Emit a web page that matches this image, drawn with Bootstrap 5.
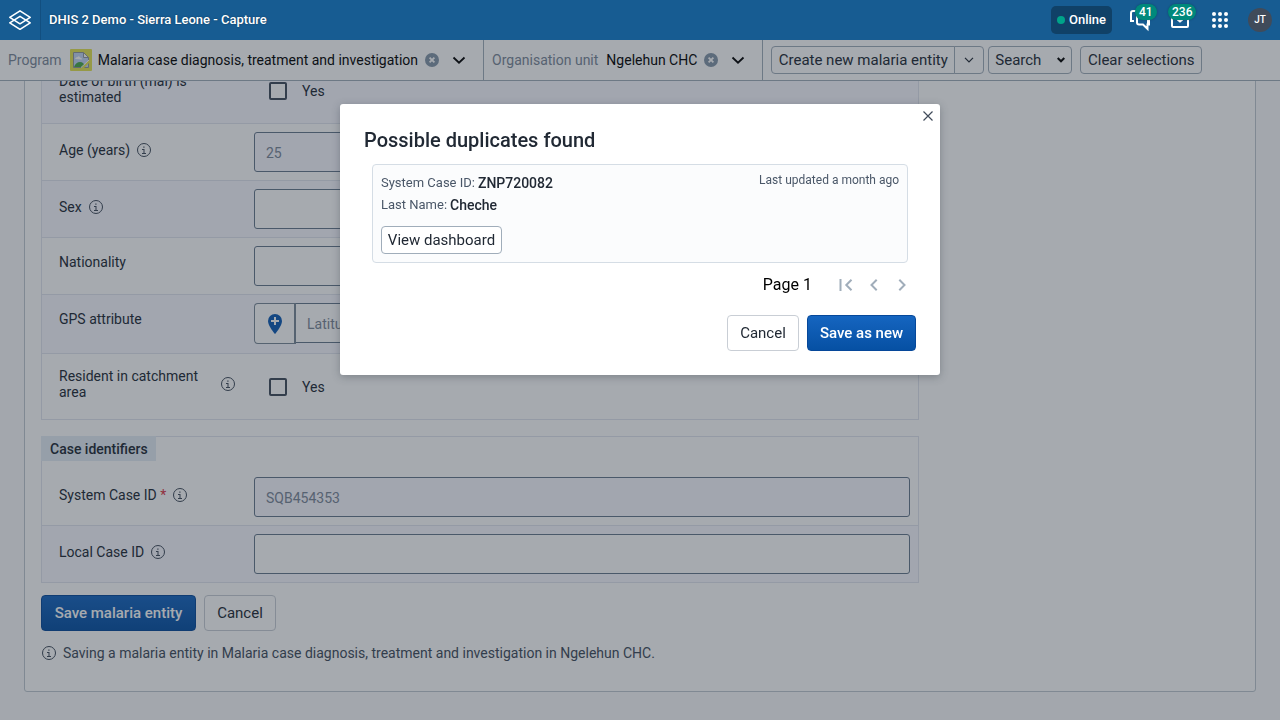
<!DOCTYPE html>
<html lang="en">
<head>
<meta charset="utf-8">
<meta name="viewport" content="width=device-width, initial-scale=1">
<title>DHIS 2 Demo - Sierra Leone - Capture</title>
<link href="https://cdn.jsdelivr.net/npm/bootstrap@5.3.0/dist/css/bootstrap.min.css" rel="stylesheet">
<style>
:root { --ink: #212934; --line: #a0adba; --soft: #e1e5ee; }
body { font-family: Roboto, "Liberation Sans", sans-serif; font-size: 14px; line-height: 16px; color: var(--ink); background: #fafbfc; }
button { font: inherit; color: inherit; }
svg { flex: none; display: block; }

.app-header { height: 40px; background: #175c92; color: #fff; z-index: 1070; position: relative; }
.logo-link { width: 41px; height: 40px; border-right: 1px solid #124f80; }
.app-title { font-size: 13px; font-weight: 500; text-shadow: 0 0 2px rgba(0,0,0,.4); }
.online-pill { height: 28px; width: 61px; background: #104167; border-radius: 5px; font-size: 13px; font-weight: 500; gap: 4px; }
.online-dot { width: 8px; height: 8px; background: #00a389; }
.slot { width: 40px; height: 40px; padding: 0; border: 0; background: none; position: relative; }
.slot-count { position: absolute; top: 4px; left: 15px; height: 16px; padding: 0 4px; border-radius: 9px; background: #00897b; color: #fff; font-size: 12px; font-weight: 500; line-height: 16px; box-shadow: 0 0 2px rgba(0,0,0,.3); }
.slot-count.wide { left: 8px; }
.avatar { width: 24px; height: 24px; background: #404b5a; font-size: 10px; font-weight: 500; }

.filter-bar { height: 41px; background: #fff; border-bottom: 1px solid var(--line); }
.filter { height: 40px; border-right: 1px solid var(--line); padding: 0 8px; gap: 6px; }
.filter-name { color: #7b8798; margin-right: 2px; }
.filter button { border: 0; background: none; padding: 0; color: #000; }
.filter .opener { margin: 0 8px 0 5px; }
.btn-dhis { font-size: 15px; line-height: 18px; color: var(--ink); background: #fff; border: 1px solid var(--line); border-radius: 4px; padding: 0; height: 28px; }
.btn-dhis:hover { background: #f3f5f7; color: var(--ink); border-color: var(--line); }
.btn-tall { height: 36px; border-color: #c9ced5; }
.btn-go { color: #fff; font-weight: 500; background: linear-gradient(#1565c0, #0650a3); border-color: #06489a; }
.btn-go:hover { color: #fff; background: #06489a; border-color: #06489a; }
.w-create { width: 184px; } .w-caret { width: 30px; } .w-search { width: 84px; } .w-clear { width: 122px; }
.w-cancel { width: 72px; } .w-save { width: 155px; } .w-new { width: 109px; } .w-view { width: 121px; }

.page-scroll { flex: 1 1 0; min-height: 0; overflow-y: auto; scrollbar-width: none; display: flex; flex-direction: column-reverse; }
.page-scroll::-webkit-scrollbar { display: none; }
.sheet { background: #fff; border: 1px solid #c0c8d0; border-radius: 3px; margin: 24px 24px 28px; padding: 16px 16px 28px; }
.form-box { max-width: 878px; border: 1px solid var(--soft); }
.form-line { border-bottom: 1px solid var(--soft); padding-left: 17px; }
.form-line:last-child { border-bottom: 0; }
.form-line.tinted { background: #f8f8ff; }
.line-name { width: 195px; flex: none; padding: 16px 18px 0 0; align-self: flex-start; gap: 6px; }
.line-name.tall { padding-top: 14px; }
.line-name label { min-height: 16px; }
.line-field { flex: 1; padding: 8px; padding-left: 0; }
.info { height: 20px; width: 16px; color: #404b5a; }
.check-line { height: 65px; }
.dh-input { height: 40px; border: 1px solid #66788c; border-radius: 3px; padding: 2px 11px 0; font-size: 14px; background: #fff; color: var(--ink); }
.dh-input:disabled { background: #f8f8ff; color: #7b8798; }
.dh-input::placeholder { color: #7b8798; }
.tick { appearance: none; width: 18px; height: 18px; margin: 0 15px; border: 2px solid #404b5a; border-radius: 2px; background: #fff; }
.tick:checked { background: #404b5a; }
.gps-line { height: 59px; }
.pin-btn { width: 42px; height: 41px; border: 1px solid #7b8998; border-right-width: 2px; border-radius: 4px 0 0 4px; background: #fff; padding: 0; color: #0d5bb5; }
.section-tag { background: #e4edf5; height: 25px; padding: 1px 8px 0 9px; line-height: 24px; margin: -1px 0 8px -1px; font-size: 14px; font-weight: 500; }
.note { color: #404b5a; gap: 6px; }

.shade { position: fixed; inset: 40px 0 0; background: rgba(33,43,54,.4); z-index: 1050; }
.modal.over { top: 40px; height: calc(100% - 40px); }
.dup-dialog { max-width: 600px; margin: 64px auto; }
.dup-box { border: 0; border-radius: 3px; padding: 24px; color: var(--ink); box-shadow: 0 2px 8px rgba(33,43,54,.3); }
.close-x { position: absolute; top: 4px; right: 4px; width: 16px; height: 16px; padding: 0; border: 0; background: none; color: #404b5a; }
.dup-title { font-size: 20px; line-height: 24px; font-weight: 500; margin: 0 0 12px; }
.dup-card { margin: 0 8px; border: 1px solid #d5dde5; border-radius: 4px; background: #fbfcfd; padding: 8px; }
.dup-card dl { font-size: 13px; line-height: 20px; color: #4a5768; gap: 2px; margin: 0 0 11px; }
.dup-card dl > div { gap: 3px; }
.dup-card dt { font-weight: 400; }
.dup-card dd { font-size: 14px; font-weight: 500; color: var(--ink); margin: 0; }
.updated { font-size: 12px; line-height: 14px; color: #4a5768; }
.pager { margin: 12px 0 20px; font-size: 16px; line-height: 20px; color: #000; }
.pager button { width: 28px; height: 20px; padding: 0; border: 0; background: none; }
</style>
</head>
<body class="d-flex flex-column vh-100 overflow-hidden">

<svg class="d-none" aria-hidden="true">
  <symbol id="i-info" viewBox="0 0 16 16"><circle cx="8" cy="8" r="6.5" fill="none" stroke="currentColor"/><path d="M7.3 4.5h1.2v1.2H7.300zM6 7h2.500v4H10v1H6v-1h1.500V8H6z" fill="currentColor"/></symbol>
  <symbol id="i-clear" viewBox="0 0 16 16"><circle cx="8" cy="8" r="7" fill="#8496a9"/><path d="M5.6 5.6l4.8 4.8M10.4 5.6l-4.8 4.8" stroke="#fff" stroke-width="1.8"/></symbol>
  <symbol id="i-down" viewBox="0 0 16 16"><path d="M2.5 5.5L8 10.7l5.5-5.2" fill="none" stroke="#000" stroke-width="1.8"/></symbol>
</svg>

<header class="app-header d-flex align-items-center flex-shrink-0">
  <a href="#" class="logo-link d-flex align-items-center justify-content-center" aria-label="Home">
    <svg width="24" height="24" viewBox="0 0 24 24" fill="none" stroke="#fff" stroke-width="1.6" stroke-linejoin="round"><path d="M12 2.800L22.200 9.300 12 15.800 1.800 9.300z"/><path d="M12 8.300L22.200 14.800 12 21.300 1.800 14.800z"/></svg>
  </a>
  <div class="app-title ms-2 me-auto">DHIS 2 Demo - Sierra Leone - Capture</div>
  <div class="online-pill d-flex align-items-center justify-content-center me-2"><span class="online-dot rounded-circle"></span>Online</div>
  <button type="button" class="slot d-flex align-items-center justify-content-center" aria-label="Messages">
    <svg width="24" height="24" viewBox="0 0 24 24" fill="none" stroke="#fff" stroke-width="2"><path d="M16 3H5Q3 3 3 5v8h3"/><path d="M20 8v8.500h1V9q0-2-2-2h-8q-2 0-2 2v5.500q0 2 2 2h4l4.500 4.300V16.500H21"/></svg>
    <span class="slot-count">41</span>
  </button>
  <button type="button" class="slot d-flex align-items-center justify-content-center" aria-label="Interpretations">
    <svg width="24" height="24" viewBox="0 0 24 24" fill="none" stroke="#fff" stroke-width="2"><path d="M4 5h16v13q0 1-1 1H5q-1 0-1-1z"/><path d="M9.500 11.500l2.500 2 2.500-2"/></svg>
    <span class="slot-count wide">236</span>
  </button>
  <button type="button" class="slot d-flex align-items-center justify-content-center" aria-label="Apps">
    <svg width="16" height="16" viewBox="0 0 16 16" fill="#fff"><circle cx="2" cy="2" r="2"/><circle cx="8" cy="2" r="2"/><circle cx="14" cy="2" r="2"/><circle cx="2" cy="8" r="2"/><circle cx="8" cy="8" r="2"/><circle cx="14" cy="8" r="2"/><circle cx="2" cy="14" r="2"/><circle cx="8" cy="14" r="2"/><circle cx="14" cy="14" r="2"/></svg>
  </button>
  <button type="button" class="slot d-flex align-items-center justify-content-center text-white"><span class="avatar rounded-circle d-flex align-items-center justify-content-center">JT</span></button>
</header>

<nav class="filter-bar d-flex align-items-center flex-shrink-0" aria-label="Selections">
  <div class="filter d-flex align-items-center">
    <span class="filter-name">Program</span>
    <svg width="22" height="22" viewBox="0 0 22 22"><rect width="22" height="22" rx="1" fill="#e4e350"/><path d="M3.500 3.500h10l5 5v10h-15z" fill="#c3d5f5" stroke="#8f979d"/><path d="M13.500 3.500v5h5z" fill="#fff" stroke="#8f979d"/><path d="M5 10q.5-2 2.500-2 1.500-1.500 2.500.5 2 0 2 2z" fill="#fff"/><path d="M4 18q2-5 6-5t5 5z" fill="#48a94a"/><path d="M11 19l8-8v3l-5 5z" fill="#e4e350"/><path d="M11 18.500l8-7.500" stroke="#fff"/></svg>
    <button type="button" class="text-nowrap">Malaria case diagnosis, treatment and investigation</button>
    <button type="button" aria-label="Clear program"><svg width="16" height="16"><use href="#i-clear"/></svg></button>
    <button type="button" class="opener" aria-label="Choose program"><svg width="16" height="16"><use href="#i-down"/></svg></button>
  </div>
  <div class="filter d-flex align-items-center">
    <span class="filter-name text-nowrap">Organisation unit</span>
    <button type="button" class="text-nowrap">Ngelehun CHC</button>
    <button type="button" aria-label="Clear organisation unit"><svg width="16" height="16"><use href="#i-clear"/></svg></button>
    <button type="button" class="opener" aria-label="Choose organisation unit"><svg width="16" height="16"><use href="#i-down"/></svg></button>
  </div>
  <div class="btn-group ms-2 me-1">
    <button type="button" class="btn btn-dhis w-create">Create new malaria entity</button>
    <button type="button" class="btn btn-dhis w-caret d-flex align-items-center justify-content-center" aria-label="More"><svg width="10" height="6" viewBox="0 0 10 6" fill="none" stroke="#212934" stroke-width="1.200"><path d="M1 .8l4 4 4-4"/></svg></button>
  </div>
  <button type="button" class="btn btn-dhis w-search d-flex align-items-center justify-content-center gap-3 me-2">Search<svg width="8" height="6" viewBox="0 0 8 6" fill="none" stroke="#000" stroke-width="2"><path d="M.7 1L4 4.300 7.300 1"/></svg></button>
  <button type="button" class="btn btn-dhis w-clear">Clear selections</button>
</nav>

<main class="page-scroll">
  <form class="sheet">
    <div class="form-box mb-3">
      <div class="form-line tinted check-line d-flex align-items-center">
        <div class="line-name tall"><label for="dob-est">Date of birth (mal) is estimated</label></div>
        <div class="d-flex align-items-center"><input class="tick" type="checkbox" id="dob-est"><label for="dob-est">Yes</label></div>
      </div>
      <div class="form-line d-flex align-items-center">
        <div class="line-name d-flex align-items-center"><label for="age">Age (years)</label><svg class="info"><use href="#i-info"/></svg></div>
        <div class="line-field"><input id="age" class="dh-input w-100 d-block" value="25" disabled></div>
      </div>
      <div class="form-line tinted d-flex align-items-center">
        <div class="line-name d-flex align-items-center"><label for="sex">Sex</label><svg class="info"><use href="#i-info"/></svg></div>
        <div class="line-field"><input id="sex" class="dh-input w-100 d-block"></div>
      </div>
      <div class="form-line d-flex align-items-center">
        <div class="line-name"><label for="nat">Nationality</label></div>
        <div class="line-field"><input id="nat" class="dh-input w-100 d-block"></div>
      </div>
      <div class="form-line tinted gps-line d-flex align-items-start">
        <div class="line-name"><label for="gps">GPS attribute</label></div>
        <div class="line-field d-flex"><button type="button" class="pin-btn d-flex align-items-center justify-content-center flex-shrink-0" aria-label="Pick on map"><svg width="16" height="20" viewBox="0 0 16 20"><path d="M8 0a7 7 0 0 0-7 7c0 5 7 13 7 13s7-8 7-13a7 7 0 0 0-7-7z" fill="currentColor"/><path d="M8 3v8M4 7h8" stroke="#fff" stroke-width="2"/></svg></button><input id="gps" class="dh-input flex-fill rounded-0 border-start-0" placeholder="Latitude"></div>
      </div>
      <div class="form-line check-line d-flex align-items-center">
        <div class="line-name tall d-flex align-items-center"><label for="resident">Resident in catchment area</label><svg class="info"><use href="#i-info"/></svg></div>
        <div class="d-flex align-items-center"><input class="tick" type="checkbox" id="resident"><label for="resident">Yes</label></div>
      </div>
    </div>

    <div class="form-box">
      <div class="d-flex"><h2 class="section-tag">Case identifiers</h2></div>
      <div class="form-line d-flex align-items-center">
        <div class="line-name d-flex align-items-center"><label for="sysid">System Case ID <span class="text-danger">*</span></label><svg class="info"><use href="#i-info"/></svg></div>
        <div class="line-field"><input id="sysid" class="dh-input w-100 d-block" value="SQB454353" disabled></div>
      </div>
      <div class="form-line tinted d-flex align-items-center">
        <div class="line-name d-flex align-items-center"><label for="localid">Local Case ID</label><svg class="info"><use href="#i-info"/></svg></div>
        <div class="line-field"><input id="localid" class="dh-input w-100 d-block"></div>
      </div>
    </div>

    <div class="d-flex gap-2 mt-2 pt-1">
      <button type="button" class="btn btn-dhis btn-tall btn-go w-save">Save malaria entity</button>
      <button type="button" class="btn btn-dhis btn-tall w-cancel">Cancel</button>
    </div>
    <div class="note d-flex align-items-center mt-2 pt-1"><svg class="info"><use href="#i-info"/></svg><span>Saving a malaria entity in Malaria case diagnosis, treatment and investigation in Ngelehun CHC.</span></div>
  </form>
</main>

<div class="shade"></div>
<div class="modal over d-block" role="dialog" aria-modal="true" aria-labelledby="dup-title">
  <div class="modal-dialog dup-dialog">
    <div class="modal-content dup-box">
      <button type="button" class="close-x d-flex align-items-center justify-content-center" aria-label="Close"><svg width="10" height="10" viewBox="0 0 10 10" stroke="currentColor" stroke-width="1.200"><path d="M.5.5l9 9M9.500.5l-9 9"/></svg></button>
      <h1 class="dup-title" id="dup-title">Possible duplicates found</h1>
      <div class="dup-card d-flex justify-content-between align-items-start">
        <div>
          <dl class="d-flex flex-column">
            <div class="d-flex"><dt>System Case ID:</dt><dd>ZNP720082</dd></div>
            <div class="d-flex"><dt>Last Name:</dt><dd>Cheche</dd></div>
          </dl>
          <button type="button" class="btn btn-dhis w-view d-block">View dashboard</button>
        </div>
        <div class="updated">Last updated a month ago</div>
      </div>
      <div class="pager d-flex align-items-center justify-content-end">
        <span class="me-3 pe-1">Page 1</span>
        <button type="button" class="d-flex align-items-center justify-content-center" aria-label="First page"><svg width="14" height="12" viewBox="0 0 14 12" fill="none" stroke="#a0adba" stroke-width="2"><path d="M1.500 0v12M12.500.8L7.300 6l5.200 5.200"/></svg></button>
        <button type="button" class="d-flex align-items-center justify-content-center" aria-label="Previous page"><svg width="8" height="12" viewBox="0 0 8 12" fill="none" stroke="#a0adba" stroke-width="2"><path d="M6.700.8L1.500 6l5.200 5.200"/></svg></button>
        <button type="button" class="d-flex align-items-center justify-content-center" aria-label="Next page"><svg width="8" height="12" viewBox="0 0 8 12" fill="none" stroke="#a0adba" stroke-width="2"><path d="M1.300.8L6.500 6l-5.200 5.200"/></svg></button>
      </div>
      <div class="d-flex justify-content-end gap-2">
        <button type="button" class="btn btn-dhis btn-tall w-cancel">Cancel</button>
        <button type="button" class="btn btn-dhis btn-tall btn-go w-new">Save as new</button>
      </div>
    </div>
  </div>
</div>
<script src="https://cdn.jsdelivr.net/npm/bootstrap@5.3.0/dist/js/bootstrap.bundle.min.js"></script>
</body>
</html>
